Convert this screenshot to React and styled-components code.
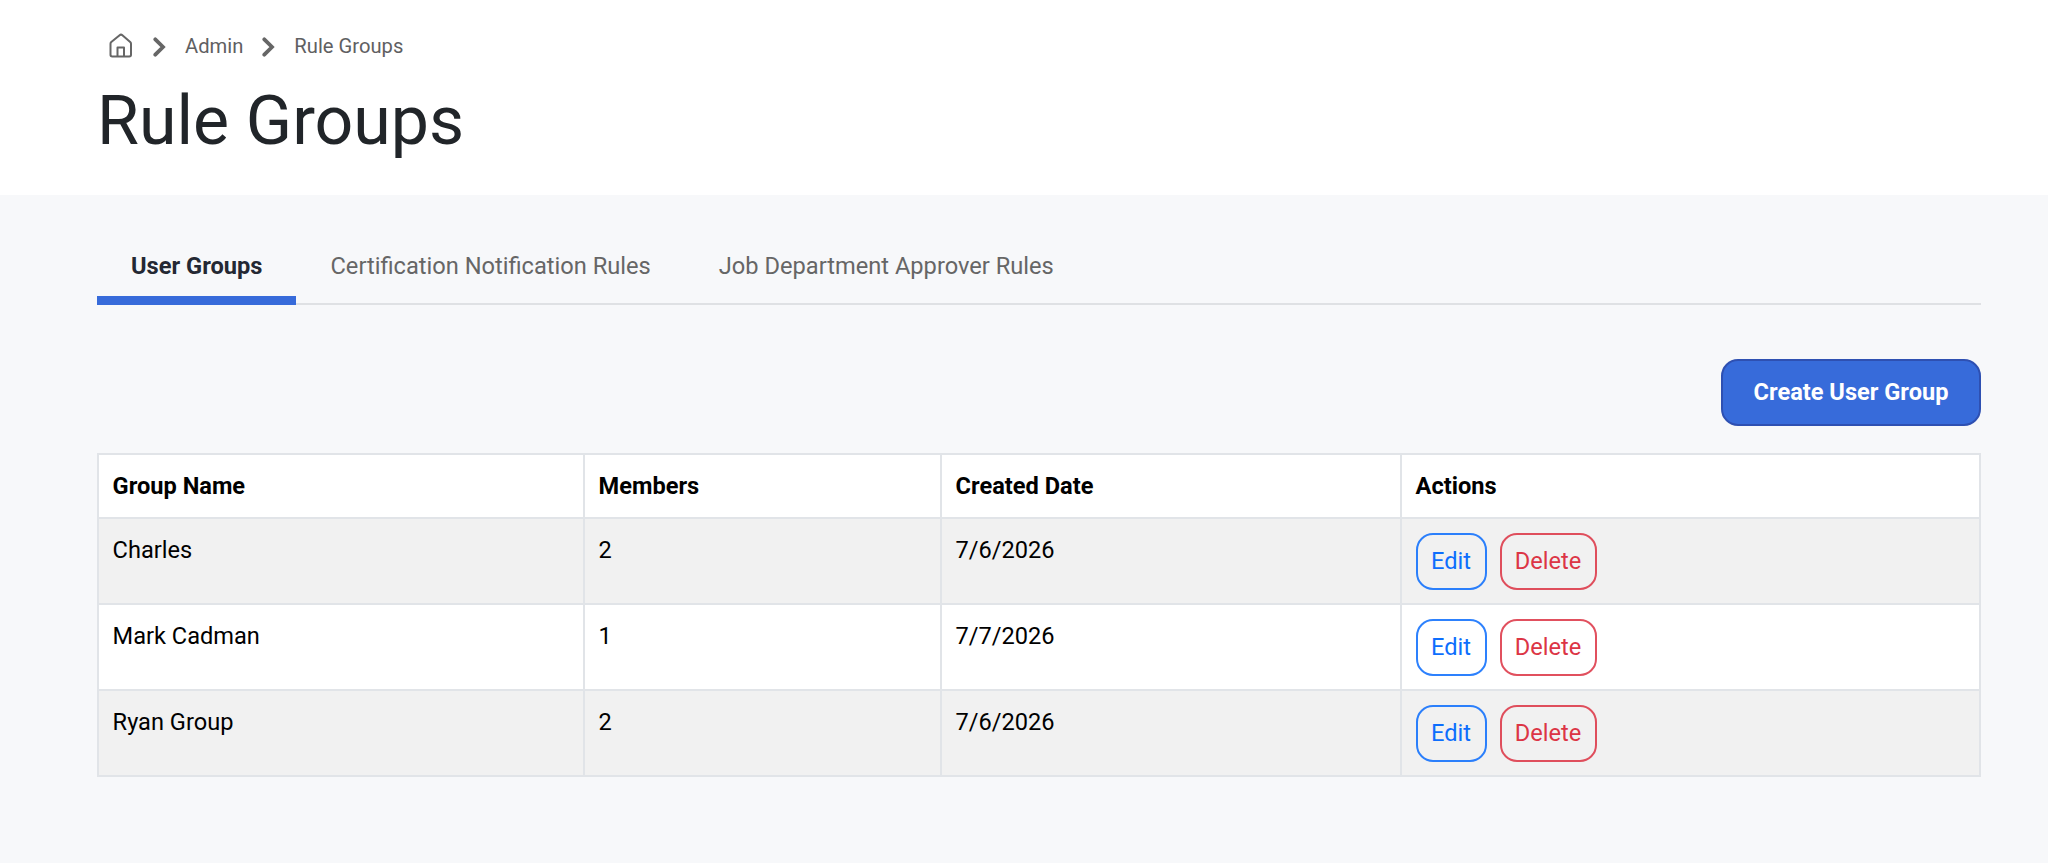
import React from "react"
import styled, { createGlobalStyle } from "styled-components"

const GlobalStyle = createGlobalStyle`
	* {
		box-sizing: border-box;
	}
	body {
		margin: 0;
		background: #f7f8fa;
		color: #000;
		font-family: Roboto, "Liberation Sans", sans-serif;
		font-size: 23.6px;
		line-height: 36px;
	}
`

const Header = styled.header`
	height: 195px;
	padding: 28px 67px 0 97px;
	background: #fff;
`

const Breadcrumb = styled.nav`
	display: flex;
	align-items: center;
	height: 36px;
	padding-left: 11px;
	color: #666;
	font-size: 20.2px;
	svg {
		display: block;
	}
`

const Crumb = styled.a`
	color: #5f6062;
	text-decoration: none;
`

const Separator = styled.span`
	padding: 1px 19px 0 19px;
`

const Title = styled.h1`
	margin: 15px 0 0;
	color: #212529;
	font-size: 68px;
	font-weight: 400;
	line-height: 84px;
`

const Main = styled.main`
	padding: 38px 67px 0 97px;
`

const Tabs = styled.div`
	display: flex;
	height: 72px;
	border-bottom: 2px solid #dfe1e4;
`

const Tab = styled.button`
	height: 72px;
	padding: 2px 34px 0;
	border: none;
	border-bottom: 9px solid ${props => (props.$active ? "#376bda" : "transparent")};
	background: none;
	color: ${props => (props.$active ? "#242833" : "#666")};
	font: inherit;
	font-size: 23.65px;
	font-weight: ${props => (props.$active ? 700 : 400)};
`

const Toolbar = styled.div`
	display: flex;
	justify-content: flex-end;
	padding: 54px 0 27px;
`

const CreateButton = styled.button`
	width: 260px;
	height: 67px;
	padding: 0 0 2px;
	border: 2px solid #2e50b2;
	border-radius: 17px;
	background: #376bda;
	color: #fff;
	font: inherit;
	font-weight: 700;
`

const Table = styled.table`
	width: 100%;
	table-layout: fixed;
	border-collapse: collapse;
	background: #fff;
`

const Row = styled.tr`
	height: ${props => (props.$head ? 64 : 86)}px;
	background: ${props => (props.$striped ? "#f1f1f1" : "#fff")};
`

const HeadCell = styled.th`
	width: ${props => props.$width}px;
	padding: 13px 13.6px;
	border: 2px solid #e1e4e8;
	text-align: left;
	vertical-align: top;
`

const Cell = styled.td`
	padding: 13px 13.6px;
	border: 2px solid #e1e4e8;
	vertical-align: top;
`

const Actions = styled.div`
	display: flex;
	gap: 13px;
	padding-top: 1px;
`

const ActionButton = styled.button`
	width: ${props => props.$width}px;
	height: 57px;
	padding: 0 0 2px;
	border: 2px solid ${props => props.$color}dd;
	border-radius: 17px;
	background: transparent;
	color: ${props => props.$color};
	font: inherit;
`

const columns = [
	{ label: "Group Name", width: 486 },
	{ label: "Members", width: 357 },
	{ label: "Created Date", width: 460 },
	{ label: "Actions", width: 579 },
]

const tabs = ["User Groups", "Certification Notification Rules", "Job Department Approver Rules"]

const groups = [
	{ name: "Charles", members: 2, created: "7/6/2026" },
	{ name: "Mark Cadman", members: 1, created: "7/7/2026" },
	{ name: "Ryan Group", members: 2, created: "7/6/2026" },
]

const HomeIcon = () => (
	<svg width="26" height="28" viewBox="0 0 26 28" fill="none" stroke="currentColor" strokeWidth="2" strokeLinejoin="round">
		<path d="M2.5 11.8Q2.5 10.8 3.3 10.1L11.6 3.2Q13 2 14.4 3.2L22.2 10.1Q23 10.8 23 11.8V22.8Q23 24.5 21.3 24.5H4.2Q2.5 24.5 2.5 22.8Z" />
		<path d="M9.5 24.5V15.5H16V24.5" />
	</svg>
)

const ChevronIcon = () => (
	<svg width="13" height="20" viewBox="0 0 13 20" fill="none" stroke="currentColor" strokeWidth="3.8" strokeLinecap="round">
		<path d="M2.3 2.3L10 10L2.3 17.7" />
	</svg>
)

export default function App() {
	return (
		<>
			<GlobalStyle />
			<Header>
				<Breadcrumb>
					<HomeIcon />
					<Separator>
						<ChevronIcon />
					</Separator>
					<Crumb>Admin</Crumb>
					<Separator>
						<ChevronIcon />
					</Separator>
					<Crumb>Rule Groups</Crumb>
				</Breadcrumb>
				<Title>Rule Groups</Title>
			</Header>
			<Main>
				<Tabs>
					{tabs.map((tab, i) => (
						<Tab key={tab} $active={i === 0}>
							{tab}
						</Tab>
					))}
				</Tabs>
				<Toolbar>
					<CreateButton>Create User Group</CreateButton>
				</Toolbar>
				<Table>
					<thead>
						<Row $head>
							{columns.map(col => (
								<HeadCell key={col.label} $width={col.width}>
									{col.label}
								</HeadCell>
							))}
						</Row>
					</thead>
					<tbody>
						{groups.map((group, i) => (
							<Row key={group.name} $striped={i % 2 === 0}>
								<Cell>{group.name}</Cell>
								<Cell>{group.members}</Cell>
								<Cell>{group.created}</Cell>
								<Cell>
									<Actions>
										<ActionButton $width={71} $color="#0d6efd">
											Edit
										</ActionButton>
										<ActionButton $width={97} $color="#dc3545">
											Delete
										</ActionButton>
									</Actions>
								</Cell>
							</Row>
						))}
					</tbody>
				</Table>
			</Main>
		</>
	)
}
